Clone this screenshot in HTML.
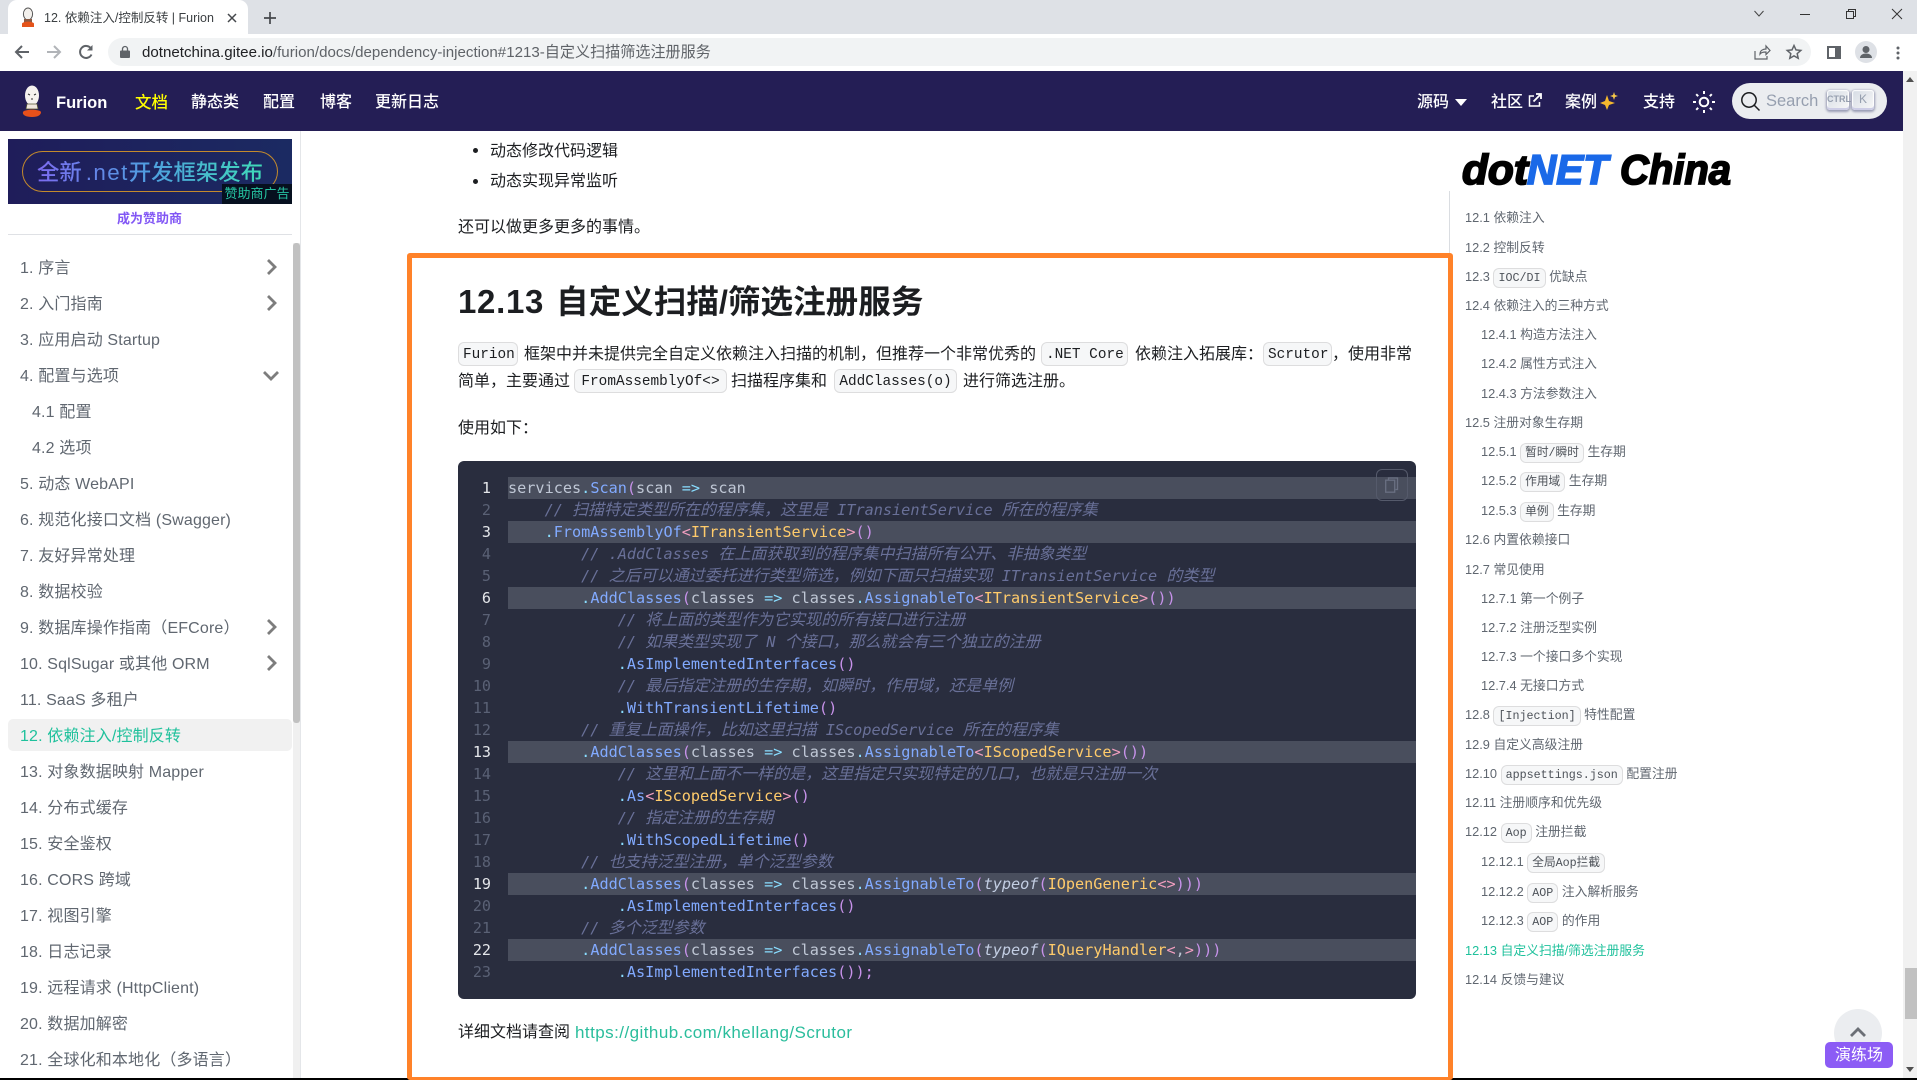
<!DOCTYPE html>
<html lang="zh"><head><meta charset="utf-8"><title>12. 依赖注入/控制反转 | Furion</title>
<style>
*{box-sizing:border-box}
html,body{margin:0;padding:0;background:#fff}
body{width:1917px;height:1080px;overflow:hidden;position:relative;font-family:"Liberation Sans","Noto Sans CJK SC",sans-serif;color:#1c1e21;font-size:16px}
.a{position:absolute;white-space:nowrap}
svg{position:absolute;display:block;overflow:visible}
.n{top:87px;height:32px;line-height:32px;color:#fff;font-weight:500;font-size:16px}
.s{left:20px;height:36px;line-height:36px;color:#606770;font-size:16px;letter-spacing:.15px;margin-top:1px}
.h{left:32px}
.c1{position:absolute;white-space:nowrap;height:24px;line-height:24px;font-size:12.8px;color:#606770;left:1465px;margin-top:1px}
.c2{left:1481px}
.c1 code{display:inline-block;height:20px;line-height:18px;padding:0 4px;border:1px solid rgba(0,0,0,.1);border-radius:6px;background:#f6f7f8;font-family:"Liberation Mono","Noto Sans CJK SC",monospace;font-size:11.7px;color:#4d5259;vertical-align:middle;margin-top:1px}
.ic{position:absolute;height:24px;line-height:24px;padding:0 4px;border:1px solid rgba(0,0,0,.1);border-radius:6px;background:#f6f7f8;font-family:"Liberation Mono",monospace;font-size:14.4px;color:#1c1e21;white-space:nowrap;text-align:center}
.t{position:absolute;white-space:nowrap;height:27px;line-height:27px;font-size:16px}
#code{position:absolute;left:458px;top:461px;width:958px;height:538px;border-radius:6px;background:#292d3e;overflow:hidden}
.hl{position:absolute;left:50px;right:0;height:22px;background:#494e5d}
.g{position:absolute;left:0;width:33px;text-align:right;height:22px;line-height:22px;font-family:"DejaVu Sans Mono",monospace;font-size:15.1px;color:#5a6175}
.g.on{color:#e4e6ea}
.l{position:absolute;left:50px;height:22px;line-height:22px;white-space:pre;font-family:"DejaVu Sans Mono","Noto Sans CJK SC",monospace;font-size:15.2px;color:#bfc7d5}
.l b{font:normal 16px/1 "Noto Sans CJK SC",sans-serif}
.l i{color:#697098;font-style:italic}
.l i b{font-style:italic}
.m{color:#82aaff}.p{color:#89ddff}.r{color:#c792ea}.k{color:#ffcb6b}.q{color:#f29fc0}
.l em{color:#c3cee3;font-style:italic}
</style></head><body>

<!-- browser chrome -->
<div class="a" style="left:0;top:0;width:1917px;height:34px;background:#dee1e6"></div>
<div class="a" style="left:0;top:34px;width:1917px;height:37px;background:#fff"></div>
<div class="a" style="left:8px;top:0;width:240px;height:35px;background:#fff;border-radius:9px 9px 0 0"></div>
<svg style="left:20px;top:8px" width="16" height="20" viewBox="0 0 16 20"><ellipse cx="8" cy="6" rx="4.6" ry="6" fill="#f3f0ec" stroke="#555" stroke-width="1"/><rect x="4" y="11" width="8" height="4" fill="#8a5a44"/><path d="M2 15.500c2-2.500 10-2.500 12 0v3.500H2z" fill="#e4531a"/></svg>
<div class="a" style="left:44px;top:8px;height:20px;line-height:20px;font-size:12.500px;color:#3c4043">12. 依赖注入/控制反转 | Furion</div>
<svg style="left:227px;top:13px" width="10" height="10" viewBox="0 0 10 10"><path d="M1 1l8 8M9 1l-8 8" stroke="#45484c" stroke-width="1.500" fill="none"/></svg>
<svg style="left:263px;top:11px" width="14" height="14" viewBox="0 0 14 14"><path d="M7 1v12M1 7h12" stroke="#45484c" stroke-width="1.700" fill="none"/></svg>
<svg style="left:1754px;top:10px" width="10" height="7" viewBox="0 0 10 7"><path d="M.5 1l4.500 5 4.500-5" stroke="#444" fill="none"/></svg>
<svg style="left:1800px;top:14px" width="10" height="1" viewBox="0 0 10 1"><path d="M0 .5h10" stroke="#333"/></svg>
<svg style="left:1846px;top:9px" width="10" height="10" viewBox="0 0 10 10"><path d="M.5 2.500h7v7h-7zM2.500 2.500v-2h7v7h-2" stroke="#333" fill="none"/></svg>
<svg style="left:1892px;top:9px" width="10" height="10" viewBox="0 0 10 10"><path d="M0 0l10 10M10 0L0 10" stroke="#333" fill="none"/></svg>

<svg style="left:14px;top:44px" width="16" height="16" viewBox="0 0 16 16"><path d="M15 8H2M8 2L2 8l6 6" stroke="#5f6368" stroke-width="2" fill="none"/></svg>
<svg style="left:46px;top:44px" width="16" height="16" viewBox="0 0 16 16"><path d="M1 8h13M8 2l6 6-6 6" stroke="#b1b4b8" stroke-width="2" fill="none"/></svg>
<svg style="left:78px;top:44px" width="16" height="16" viewBox="0 0 16 16"><path d="M13.500 10.500A6 6 0 1 1 13 4.500" stroke="#5f6368" stroke-width="2" fill="none"/><path d="M14.500 1v5.500H9z" fill="#5f6368"/></svg>
<div class="a" style="left:108px;top:38px;width:1703px;height:28px;background:#f1f3f4;border-radius:14px"></div>
<svg style="left:120px;top:46px" width="10" height="12" viewBox="0 0 10 12"><rect y="4.500" width="10" height="7.500" rx="1" fill="#5f6368"/><path d="M2.500 5V3a2.500 2.500 0 0 1 5 0v2" stroke="#5f6368" stroke-width="1.300" fill="none"/></svg>
<div class="a" style="left:142px;top:43px;height:20px;line-height:20px;font-size:15.1px;color:#5f6368"><span style="color:#202124">dotnetchina.gitee.io</span>/furion/docs/dependency-injection#1213-自定义扫描筛选注册服务</div>
<svg style="left:1754px;top:45px" width="16" height="15" viewBox="0 0 16 15"><path d="M1 6v8h12v-3M6 9c0-3.500 3-5 6-5V1l4 4.500L12 9.500V7c-2.500 0-5 .5-6 2z" stroke="#5f6368" stroke-width="1.200" fill="none"/></svg>
<svg style="left:1786px;top:44px" width="16" height="16" viewBox="0 0 16 16"><path d="M8 1.500l2 4.400 4.800.5-3.600 3.200 1 4.700L8 11.900l-4.200 2.400 1-4.700L1.200 6.400 6 5.900z" stroke="#5f6368" stroke-width="1.500" fill="none"/></svg>
<svg style="left:1827px;top:46px" width="14" height="13" viewBox="0 0 14 13"><rect x="1" y="1" width="12" height="11" fill="none" stroke="#5f6368" stroke-width="2"/><rect x="8" y="1" width="5" height="11" fill="#5f6368"/></svg>
<svg style="left:1855px;top:41px" width="22" height="22" viewBox="0 0 22 22"><circle cx="11" cy="11" r="11" fill="#dee1e6"/><circle cx="11" cy="8.500" r="3.500" fill="#5f6368"/><path d="M5 17c0-3 3-4.500 6-4.500s6 1.500 6 4.500z" fill="#5f6368"/></svg>
<svg style="left:1896px;top:46px" width="4" height="14" viewBox="0 0 4 14"><circle cx="2" cy="2" r="1.500" fill="#5f6368"/><circle cx="2" cy="7" r="1.500" fill="#5f6368"/><circle cx="2" cy="12" r="1.500" fill="#5f6368"/></svg>

<!-- navbar -->
<div class="a" style="left:0;top:71px;width:1903px;height:60px;background:#241e55"></div>
<svg style="left:21px;top:85px" width="22" height="33" viewBox="0 0 22 33"><ellipse cx="11" cy="10.500" rx="7" ry="10" fill="#f5f2ee"/><path d="M7 9l2 1M13 10l2-1M10 14h2" stroke="#333" fill="none"/><path d="M6 19h10l1 5H5z" fill="#efe6dc" stroke="#553" stroke-width=".7"/><path d="M2 27c1-3 17-3 18 0 0 3-3 5-9 5s-10-2-9-5z" fill="#e8501a"/></svg>
<div class="a n" style="left:56px;font-weight:700;font-size:16.500px">Furion</div>
<div class="a n" style="left:135px;color:#ff0;font-size:16.500px">文档</div>
<div class="a n" style="left:191px">静态类</div>
<div class="a n" style="left:263px">配置</div>
<div class="a n" style="left:320px">博客</div>
<div class="a n" style="left:375px">更新日志</div>
<div class="a n" style="left:1417px">源码</div>
<svg style="left:1455px;top:99px" width="12" height="7" viewBox="0 0 12 7"><path d="M0 0h12L6 7z" fill="#fff"/></svg>
<div class="a n" style="left:1491px">社区</div>
<svg style="left:1528px;top:93px" width="14" height="14" viewBox="0 0 14 14"><path d="M6 3H1.500v10h10V9" stroke="#fff" stroke-width="1.500" fill="none"/><path d="M5.500 8.500L12 2M8 1h5v5" stroke="#fff" stroke-width="1.800" fill="none"/></svg>
<div class="a n" style="left:1565px">案例</div>
<svg style="left:1600px;top:92px" width="18" height="18" viewBox="0 0 18 18"><path d="M7 3l2 6 6 2-6 2-2 5-2-5-5-2 5-2z" fill="#f5b82e"/><path d="M14 0l1 3 3 1-3 1-1 3-1-3-3-1 3-1z" fill="#f7c948"/></svg>
<div class="a n" style="left:1643px">支持</div>
<svg style="left:1693px;top:91px" width="22" height="22" viewBox="0 0 22 22"><circle cx="11" cy="11" r="4.300" fill="none" stroke="#fff" stroke-width="2"/><path d="M11 0v3M11 19v3M0 11h3M19 11h3M3.200 3.200l2 2M16.800 16.800l2 2M3.200 18.800l2-2M16.800 5.200l2-2" stroke="#fff" stroke-width="2"/></svg>
<div class="a" style="left:1732px;top:83px;width:155px;height:36px;border-radius:18px;background:#ebedf0"></div>
<svg style="left:1741px;top:92px" width="19" height="19" viewBox="0 0 19 19"><circle cx="8" cy="8" r="7.200" fill="none" stroke="#1c1e21" stroke-width="1.500"/><path d="M13 13l5.500 5.500" stroke="#1c1e21" stroke-width="1.500"/></svg>
<div class="a" style="left:1766px;top:89px;height:24px;line-height:24px;font-size:16.500px;color:#969faf">Search</div>
<div class="a" style="left:1827px;top:90px;width:22px;height:20px;border-radius:3px;background:linear-gradient(-225deg,#d5dbe4,#f8f8f8);box-shadow:inset 0 -2px 0 0 #cdcde6,inset 0 0 1px 1px #fff,0 1px 2px 1px rgba(30,35,90,.4);color:#969faf;font-size:9px;line-height:18px;text-align:center;font-family:'Liberation Sans Narrow','Liberation Sans',sans-serif;font-weight:700">CTRL</div>
<div class="a" style="left:1852px;top:90px;width:22px;height:20px;border-radius:3px;background:linear-gradient(-225deg,#d5dbe4,#f8f8f8);box-shadow:inset 0 -2px 0 0 #cdcde6,inset 0 0 1px 1px #fff,0 1px 2px 1px rgba(30,35,90,.4);color:#969faf;font-size:12px;line-height:18px;text-align:center">K</div>

<!-- page scrollbar -->
<div class="a" style="left:1903px;top:71px;width:14px;height:1009px;background:#f1f1f1"></div>
<svg style="left:1906px;top:77px" width="8" height="5" viewBox="0 0 8 5"><path d="M4 0l4 5H0z" fill="#505050"/></svg>
<div class="a" style="left:1905px;top:968px;width:12px;height:51px;background:#c1c1c1"></div>
<svg style="left:1906px;top:1067px" width="8" height="5" viewBox="0 0 8 5"><path d="M0 0h8L4 5z" fill="#505050"/></svg>

<!-- sidebar -->
<div class="a" style="left:300px;top:131px;width:1px;height:949px;background:#e4e6e9"></div>
<div class="a" style="left:8px;top:139px;width:284px;height:65px;background:linear-gradient(90deg,#1f1d5a,#1b2a62)"></div>
<div class="a" style="left:22px;top:151px;width:256px;height:41px;border:1.500px solid #c48a2c;border-radius:21px"></div>
<div class="a" style="left:37px;top:156px;height:34px;line-height:34px;font-size:22.4px;font-weight:500;background:linear-gradient(90deg,#7c6cf0,#4f9fe0 50%,#3fdcb8);-webkit-background-clip:text;background-clip:text;color:transparent">全新<span style="letter-spacing:1.400px;margin-left:4px">.net</span>开发框架发布</div>
<div class="a" style="left:222px;top:184px;width:70px;height:20px;background:#06101f;color:#25c2a0;font-size:13px;line-height:20px;text-align:center">赞助商广告</div>
<div class="a" style="left:117px;top:209px;height:20px;line-height:20px;font-size:13px;font-weight:700;color:#8257f5">成为赞助商</div>
<div class="a" style="left:8px;top:234px;width:284px;height:1px;background:#dfe1e5"></div>
<div class="a" style="left:293px;top:243px;width:7px;height:837px;background:#f0f0f0"></div>
<div class="a" style="left:293px;top:243px;width:7px;height:480px;background:#c1c1c1;border-radius:3px"></div>
<div class="a" style="left:8px;top:719px;width:284px;height:32px;background:#f1f1f1;border-radius:5px"></div>

<div class="a s" style="top:250px">1. 序言</div>
<div class="a s" style="top:286px">2. 入门指南</div>
<div class="a s" style="top:322px">3. 应用启动 Startup</div>
<div class="a s" style="top:358px">4. 配置与选项</div>
<div class="a s h" style="top:394px">4.1 配置</div>
<div class="a s h" style="top:430px">4.2 选项</div>
<div class="a s" style="top:466px">5. 动态 WebAPI</div>
<div class="a s" style="top:502px">6. 规范化接口文档 (Swagger)</div>
<div class="a s" style="top:538px">7. 友好异常处理</div>
<div class="a s" style="top:574px">8. 数据校验</div>
<div class="a s" style="top:610px">9. 数据库操作指南（EFCore）</div>
<div class="a s" style="top:646px">10. SqlSugar 或其他 ORM</div>
<div class="a s" style="top:682px">11. SaaS 多租户</div>
<div class="a s" style="top:718px;color:#1fc19c">12. 依赖注入/控制反转</div>
<div class="a s" style="top:754px">13. 对象数据映射 Mapper</div>
<div class="a s" style="top:790px">14. 分布式缓存</div>
<div class="a s" style="top:826px">15. 安全鉴权</div>
<div class="a s" style="top:862px">16. CORS 跨域</div>
<div class="a s" style="top:898px">17. 视图引擎</div>
<div class="a s" style="top:934px">18. 日志记录</div>
<div class="a s" style="top:970px">19. 远程请求 (HttpClient)</div>
<div class="a s" style="top:1006px">20. 数据加解密</div>
<div class="a s" style="top:1042px">21. 全球化和本地化（多语言）</div>
<svg style="left:266px;top:259px" width="11" height="16" viewBox="0 0 11 16"><path d="M2 1l7 7-7 7" stroke="#7d7d7d" stroke-width="2.800" fill="none"/></svg>
<svg style="left:266px;top:295px" width="11" height="16" viewBox="0 0 11 16"><path d="M2 1l7 7-7 7" stroke="#7d7d7d" stroke-width="2.800" fill="none"/></svg>
<svg style="left:263px;top:370px" width="16" height="11" viewBox="0 0 16 11"><path d="M1 2l7 7 7-7" stroke="#7d7d7d" stroke-width="2.800" fill="none"/></svg>
<svg style="left:266px;top:619px" width="11" height="16" viewBox="0 0 11 16"><path d="M2 1l7 7-7 7" stroke="#7d7d7d" stroke-width="2.800" fill="none"/></svg>
<svg style="left:266px;top:655px" width="11" height="16" viewBox="0 0 11 16"><path d="M2 1l7 7-7 7" stroke="#7d7d7d" stroke-width="2.800" fill="none"/></svg>

<!-- content -->
<div class="a" style="left:473px;top:148px;width:5px;height:5px;border-radius:50%;background:#1c1e21"></div>
<div class="t" style="left:490px;top:138px">动态修改代码逻辑</div>
<div class="a" style="left:473px;top:179px;width:5px;height:5px;border-radius:50%;background:#1c1e21"></div>
<div class="t" style="left:490px;top:168px">动态实现异常监听</div>
<div class="t" style="left:458px;top:214px">还可以做更多更多的事情。</div>
<div class="a" style="left:458px;top:279px;height:46px;line-height:46px;font-size:33px;font-weight:700;letter-spacing:.7px;color:#1c1e21">12.13</div>
<div class="a" style="left:556px;top:279px;height:46px;line-height:46px;font-size:32.6px;font-weight:700;color:#1c1e21">自定义扫描/筛选注册服务</div>

<div class="ic" style="left:458px;top:342px;width:60px">Furion</div>
<div class="t" style="left:524px;top:341px">框架中并未提供完全自定义依赖注入扫描的机制，但推荐一个非常优秀的</div>
<div class="ic" style="left:1041px;top:342px;width:87px">.NET Core</div>
<div class="t" style="left:1135px;top:341px">依赖注入拓展库：</div>
<div class="ic" style="left:1263px;top:342px;width:69px">Scrutor</div>
<div class="t" style="left:1332px;top:341px">，使用非常</div>
<div class="t" style="left:458px;top:368px">简单，主要通过</div>
<div class="ic" style="left:574px;top:369px;width:153px">FromAssemblyOf&lt;&gt;</div>
<div class="t" style="left:731px;top:368px">扫描程序集和</div>
<div class="ic" style="left:834px;top:369px;width:123px">AddClasses(o)</div>
<div class="t" style="left:963px;top:368px">进行筛选注册。</div>
<div class="t" style="left:458px;top:415px">使用如下：</div>

<div id="code">
<div class="hl" style="top:16px"></div><div class="hl" style="top:60px"></div><div class="hl" style="top:126px"></div><div class="hl" style="top:280px"></div><div class="hl" style="top:412px"></div><div class="hl" style="top:478px"></div>
<div class="g on" style="top:16px">1</div><div class="g" style="top:38px">2</div><div class="g on" style="top:60px">3</div><div class="g" style="top:82px">4</div><div class="g" style="top:104px">5</div><div class="g on" style="top:126px">6</div><div class="g" style="top:148px">7</div><div class="g" style="top:170px">8</div><div class="g" style="top:192px">9</div><div class="g" style="top:214px">10</div><div class="g" style="top:236px">11</div><div class="g" style="top:258px">12</div><div class="g on" style="top:280px">13</div><div class="g" style="top:302px">14</div><div class="g" style="top:324px">15</div><div class="g" style="top:346px">16</div><div class="g" style="top:368px">17</div><div class="g" style="top:390px">18</div><div class="g on" style="top:412px">19</div><div class="g" style="top:434px">20</div><div class="g" style="top:456px">21</div><div class="g on" style="top:478px">22</div><div class="g" style="top:500px">23</div>
<div class="l" style="top:16px">services<span class="p">.</span><span class="m">Scan</span><span class="r">(</span>scan <span class="p">=&gt;</span> scan</div>
<div class="l" style="top:38px">    <i>// <b>扫描特定类型所在的程序集，这里是</b> ITransientService <b>所在的程序集</b></i></div>
<div class="l" style="top:60px">    <span class="p">.</span><span class="m">FromAssemblyOf</span><span class="q">&lt;</span><span class="k">ITransientService</span><span class="q">&gt;</span><span class="r">()</span></div>
<div class="l" style="top:82px">        <i>// .AddClasses <b>在上面获取到的程序集中扫描所有公开、非抽象类型</b></i></div>
<div class="l" style="top:104px">        <i>// <b>之后可以通过委托进行类型筛选，例如下面只扫描实现</b> ITransientService <b>的类型</b></i></div>
<div class="l" style="top:126px">        <span class="p">.</span><span class="m">AddClasses</span><span class="r">(</span>classes <span class="p">=&gt;</span> classes<span class="p">.</span><span class="m">AssignableTo</span><span class="q">&lt;</span><span class="k">ITransientService</span><span class="q">&gt;</span><span class="r">())</span></div>
<div class="l" style="top:148px">            <i>// <b>将上面的类型作为它实现的所有接口进行注册</b></i></div>
<div class="l" style="top:170px">            <i>// <b>如果类型实现了</b> N <b>个接口，那么就会有三个独立的注册</b></i></div>
<div class="l" style="top:192px">            <span class="p">.</span><span class="m">AsImplementedInterfaces</span><span class="r">()</span></div>
<div class="l" style="top:214px">            <i>// <b>最后指定注册的生存期，如瞬时，作用域，还是单例</b></i></div>
<div class="l" style="top:236px">            <span class="p">.</span><span class="m">WithTransientLifetime</span><span class="r">()</span></div>
<div class="l" style="top:258px">        <i>// <b>重复上面操作，比如这里扫描</b> IScopedService <b>所在的程序集</b></i></div>
<div class="l" style="top:280px">        <span class="p">.</span><span class="m">AddClasses</span><span class="r">(</span>classes <span class="p">=&gt;</span> classes<span class="p">.</span><span class="m">AssignableTo</span><span class="q">&lt;</span><span class="k">IScopedService</span><span class="q">&gt;</span><span class="r">())</span></div>
<div class="l" style="top:302px">            <i>// <b>这里和上面不一样的是，这里指定只实现特定的几口，也就是只注册一次</b></i></div>
<div class="l" style="top:324px">            <span class="p">.</span><span class="m">As</span><span class="q">&lt;</span><span class="k">IScopedService</span><span class="q">&gt;</span><span class="r">()</span></div>
<div class="l" style="top:346px">            <i>// <b>指定注册的生存期</b></i></div>
<div class="l" style="top:368px">            <span class="p">.</span><span class="m">WithScopedLifetime</span><span class="r">()</span></div>
<div class="l" style="top:390px">        <i>// <b>也支持泛型注册，单个泛型参数</b></i></div>
<div class="l" style="top:412px">        <span class="p">.</span><span class="m">AddClasses</span><span class="r">(</span>classes <span class="p">=&gt;</span> classes<span class="p">.</span><span class="m">AssignableTo</span><span class="r">(</span><em>typeof</em><span class="r">(</span><span class="k">IOpenGeneric</span><span class="q">&lt;&gt;</span><span class="r">)))</span></div>
<div class="l" style="top:434px">            <span class="p">.</span><span class="m">AsImplementedInterfaces</span><span class="r">()</span></div>
<div class="l" style="top:456px">        <i>// <b>多个泛型参数</b></i></div>
<div class="l" style="top:478px">        <span class="p">.</span><span class="m">AddClasses</span><span class="r">(</span>classes <span class="p">=&gt;</span> classes<span class="p">.</span><span class="m">AssignableTo</span><span class="r">(</span><em>typeof</em><span class="r">(</span><span class="k">IQueryHandler</span><span class="q">&lt;</span>,<span class="q">&gt;</span><span class="r">)))</span></div>
<div class="l" style="top:500px">            <span class="p">.</span><span class="m">AsImplementedInterfaces</span><span class="r">());</span></div>
<div class="a" style="left:918px;top:8px;width:32px;height:32px;border:1px solid #555a6b;border-radius:6px"></div>
<svg style="left:927px;top:16px" width="13" height="16" viewBox="0 0 13 16"><path d="M3.500 3V1h9v11.500h-2" stroke="#6a7082" stroke-width="1.300" fill="none"/><rect x=".7" y="3.200" width="9" height="12" fill="none" stroke="#6a7082" stroke-width="1.300"/></svg>
</div>

<div class="t" style="left:458px;top:1019px">详细文档请查阅</div>
<div class="t" style="left:575px;top:1019px;font-size:17px;letter-spacing:.45px;color:#2abd9c">https://github.com/khellang/Scrutor</div>

<!-- right column -->
<svg style="left:1462px;top:150px" width="275" height="40" viewBox="0 0 275 40"><text x="0" y="34" font-family="Liberation Sans" font-weight="700" font-style="italic" font-size="42" stroke="#000" stroke-width="1.800" textLength="66" lengthAdjust="spacingAndGlyphs">dot</text><text x="65" y="34" font-family="Liberation Sans" font-weight="700" font-style="italic" font-size="42" fill="#1a69e8" stroke="#1a69e8" stroke-width="1.800" textLength="81" lengthAdjust="spacingAndGlyphs">NET</text><text x="158" y="34" font-family="Liberation Sans" font-weight="700" font-style="italic" font-size="42" stroke="#000" stroke-width="1.800" textLength="111" lengthAdjust="spacingAndGlyphs">China</text></svg>
<div class="a" style="left:1449px;top:191px;width:1px;height:889px;background:#dadde1"></div>

<div class="c1" style="top:205px">12.1 依赖注入</div>
<div class="c1" style="top:235px">12.2 控制反转</div>
<div class="c1" style="top:264px">12.3 <code>IOC/DI</code> 优缺点</div>
<div class="c1" style="top:293px">12.4 依赖注入的三种方式</div>
<div class="c1 c2" style="top:322px">12.4.1 构造方法注入</div>
<div class="c1 c2" style="top:351px">12.4.2 属性方式注入</div>
<div class="c1 c2" style="top:381px">12.4.3 方法参数注入</div>
<div class="c1" style="top:410px">12.5 注册对象生存期</div>
<div class="c1 c2" style="top:439px">12.5.1 <code>暂时/瞬时</code> 生存期</div>
<div class="c1 c2" style="top:468px">12.5.2 <code>作用域</code> 生存期</div>
<div class="c1 c2" style="top:498px">12.5.3 <code>单例</code> 生存期</div>
<div class="c1" style="top:527px">12.6 内置依赖接口</div>
<div class="c1" style="top:557px">12.7 常见使用</div>
<div class="c1 c2" style="top:586px">12.7.1 第一个例子</div>
<div class="c1 c2" style="top:615px">12.7.2 注册泛型实例</div>
<div class="c1 c2" style="top:644px">12.7.3 一个接口多个实现</div>
<div class="c1 c2" style="top:673px">12.7.4 无接口方式</div>
<div class="c1" style="top:702px">12.8 <code>[Injection]</code> 特性配置</div>
<div class="c1" style="top:732px">12.9 自定义高级注册</div>
<div class="c1" style="top:761px">12.10 <code>appsettings.json</code> 配置注册</div>
<div class="c1" style="top:790px">12.11 注册顺序和优先级</div>
<div class="c1" style="top:819px">12.12 <code>Aop</code> 注册拦截</div>
<div class="c1 c2" style="top:849px">12.12.1 <code>全局Aop拦截</code></div>
<div class="c1 c2" style="top:879px">12.12.2 <code>AOP</code> 注入解析服务</div>
<div class="c1 c2" style="top:908px">12.12.3 <code>AOP</code> 的作用</div>
<div class="c1" style="top:938px;color:#1fc19c">12.13 自定义扫描/筛选注册服务</div>
<div class="c1" style="top:967px">12.14 反馈与建议</div>

<!-- floating -->
<div class="a" style="left:1834px;top:1009px;width:48px;height:48px;border-radius:50%;background:#ebedf0"></div>
<svg style="left:1850px;top:1027px" width="16" height="10" viewBox="0 0 16 10"><path d="M1 9l7-7 7 7" stroke="#6b6f76" stroke-width="2.800" fill="none"/></svg>
<div class="a" style="left:1825px;top:1042px;width:68px;height:26px;border-radius:5px;background:#8c5cf5;color:#fff;font-size:16px;line-height:28px;text-align:center">演练场</div>

<!-- bottom edge + annotation -->
<div class="a" style="left:0;top:1078px;width:1917px;height:2px;background:#000"></div>
<div class="a" style="left:407px;top:253px;width:1046px;height:827px;border:5px solid #ff8229;border-bottom-width:3px;border-radius:3px"></div>
</body></html>
